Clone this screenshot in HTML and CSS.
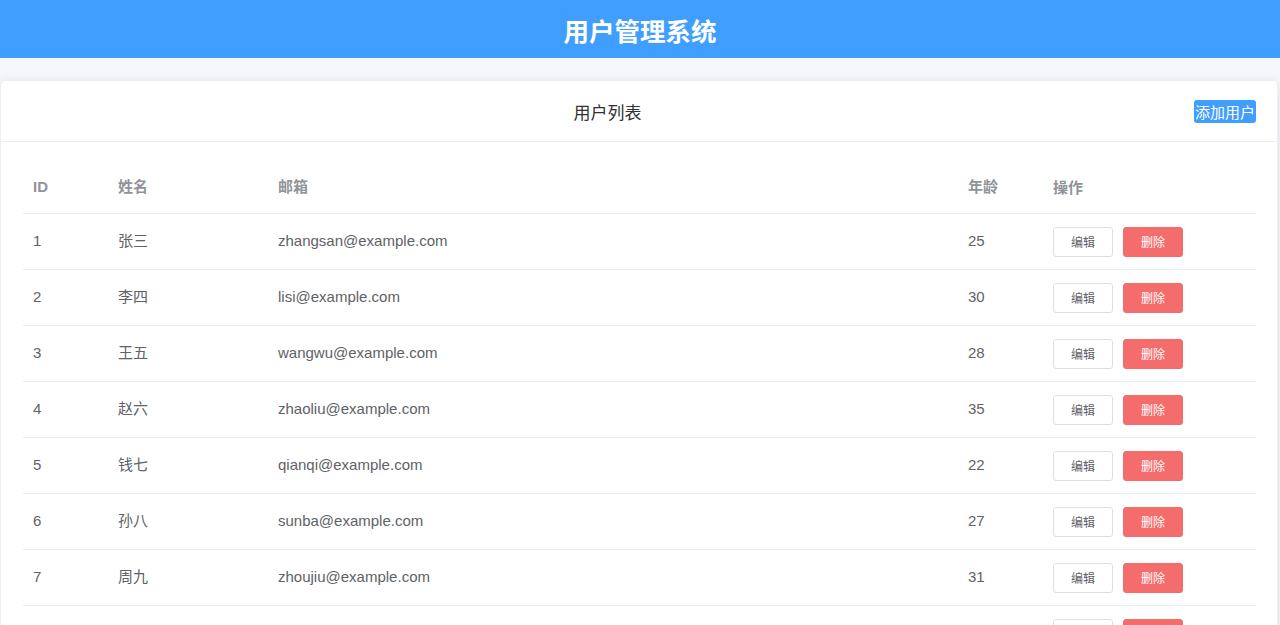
FILE: index.html
```html
<!DOCTYPE html>
<html lang="zh-CN">
<head>
<meta charset="utf-8">
<title>用户管理系统</title>
<link rel="stylesheet" href="styles.css">
</head>
<body>
<header class="app-header">
  <h1 class="app-title">用户管理系统</h1>
</header>
<main class="app-main">
  <section class="card">
    <div class="card-header">
      <span class="card-title">用户列表</span>
      <button class="btn-add">添加用户</button>
    </div>
    <div class="card-body">
      <div class="table">
        <div class="row head">
          <div class="cell c-id">ID</div>
          <div class="cell c-name">姓名</div>
          <div class="cell c-email">邮箱</div>
          <div class="cell c-age">年龄</div>
          <div class="cell c-ops">操作</div>
        </div>
        <div class="row">
          <div class="cell c-id">1</div><div class="cell c-name">张三</div><div class="cell c-email">zhangsan@example.com</div><div class="cell c-age">25</div>
          <div class="cell c-ops"><button class="btn btn-edit">编辑</button><button class="btn btn-del">删除</button></div>
        </div>
        <div class="row">
          <div class="cell c-id">2</div><div class="cell c-name">李四</div><div class="cell c-email">lisi@example.com</div><div class="cell c-age">30</div>
          <div class="cell c-ops"><button class="btn btn-edit">编辑</button><button class="btn btn-del">删除</button></div>
        </div>
        <div class="row">
          <div class="cell c-id">3</div><div class="cell c-name">王五</div><div class="cell c-email">wangwu@example.com</div><div class="cell c-age">28</div>
          <div class="cell c-ops"><button class="btn btn-edit">编辑</button><button class="btn btn-del">删除</button></div>
        </div>
        <div class="row">
          <div class="cell c-id">4</div><div class="cell c-name">赵六</div><div class="cell c-email">zhaoliu@example.com</div><div class="cell c-age">35</div>
          <div class="cell c-ops"><button class="btn btn-edit">编辑</button><button class="btn btn-del">删除</button></div>
        </div>
        <div class="row">
          <div class="cell c-id">5</div><div class="cell c-name">钱七</div><div class="cell c-email">qianqi@example.com</div><div class="cell c-age">22</div>
          <div class="cell c-ops"><button class="btn btn-edit">编辑</button><button class="btn btn-del">删除</button></div>
        </div>
        <div class="row">
          <div class="cell c-id">6</div><div class="cell c-name">孙八</div><div class="cell c-email">sunba@example.com</div><div class="cell c-age">27</div>
          <div class="cell c-ops"><button class="btn btn-edit">编辑</button><button class="btn btn-del">删除</button></div>
        </div>
        <div class="row">
          <div class="cell c-id">7</div><div class="cell c-name">周九</div><div class="cell c-email">zhoujiu@example.com</div><div class="cell c-age">31</div>
          <div class="cell c-ops"><button class="btn btn-edit">编辑</button><button class="btn btn-del">删除</button></div>
        </div>
        <div class="row">
          <div class="cell c-id">8</div><div class="cell c-name">吴十</div><div class="cell c-email">wushi@example.com</div><div class="cell c-age">29</div>
          <div class="cell c-ops"><button class="btn btn-edit">编辑</button><button class="btn btn-del">删除</button></div>
        </div>
      </div>
    </div>
  </section>
</main>
</body>
</html>
```
FILE: styles.css
```css
* { box-sizing: border-box; }
html, body { margin: 0; padding: 0; }
body {
  font-family: "Liberation Sans", "Noto Sans CJK SC", sans-serif;
  background: #f5f7fa;
  color: #606266;
  font-size: 15px;
}
.app-header {
  height: 58px;
  background: #409eff;
  display: flex;
  align-items: center;
  justify-content: center;
}
.app-title {
  margin: 0;
  color: #fff;
  font-size: 25.5px;
  font-weight: bold;
  font-family: "Noto Sans CJK SC", sans-serif;
}
.app-main {
  padding: 22px 2px 0 0;
}
.card {
  background: #fff;
  border: 1px solid #ebeef5;
  border-radius: 4px;
  box-shadow: 0 2px 12px 0 rgba(0, 0, 0, 0.1);
  overflow: hidden;
}
.card-header {
  height: 61px;
  border-bottom: 1px solid #ebeef5;
  display: flex;
  align-items: center;
  padding: 0 21px 0 20px;
}
.card-title {
  flex: 1;
  text-align: center;
  font-family: "Noto Sans CJK SC", sans-serif;
  font-size: 17px;
  font-weight: 400;
  color: #303133;
}
.btn-add {
  height: 23px;
  padding: 0 1px;
  border: none;
  border-radius: 3px;
  background: #409eff;
  color: #fff;
  font-family: "Noto Sans CJK SC", sans-serif;
  font-size: 15px;
  line-height: 23px;
}
.card-body {
  padding: 20px 21px 20px 22px;
}
.table {
  display: flex;
  flex-direction: column;
}
.row {
  display: flex;
  align-items: center;
  height: 56px;
  border-bottom: 1px solid #ebeef5;
}
.row.head {
  height: 52px;
  color: #909399;
  font-weight: bold;
}
.cell {
  padding: 0 10px;
  line-height: 22px;
  margin-top: -1px;
}
.c-id { width: 85px; }
.c-name { width: 160px; }
.c-email { flex: 1; }
.c-age { width: 85px; }
.c-ops { width: 213px; display: flex; gap: 10px; margin-top: 0; }
.btn {
  width: 60px;
  height: 30px;
  border-radius: 3px;
  font-size: 12px;
  font-family: "Noto Sans CJK SC", sans-serif;
  padding: 0;
}
.btn-edit {
  background: #fff;
  border: 1px solid #dcdfe6;
  color: #606266;
}
.btn-del {
  background: #f56c6c;
  border: 1px solid #f56c6c;
  color: #fff;
}
```
